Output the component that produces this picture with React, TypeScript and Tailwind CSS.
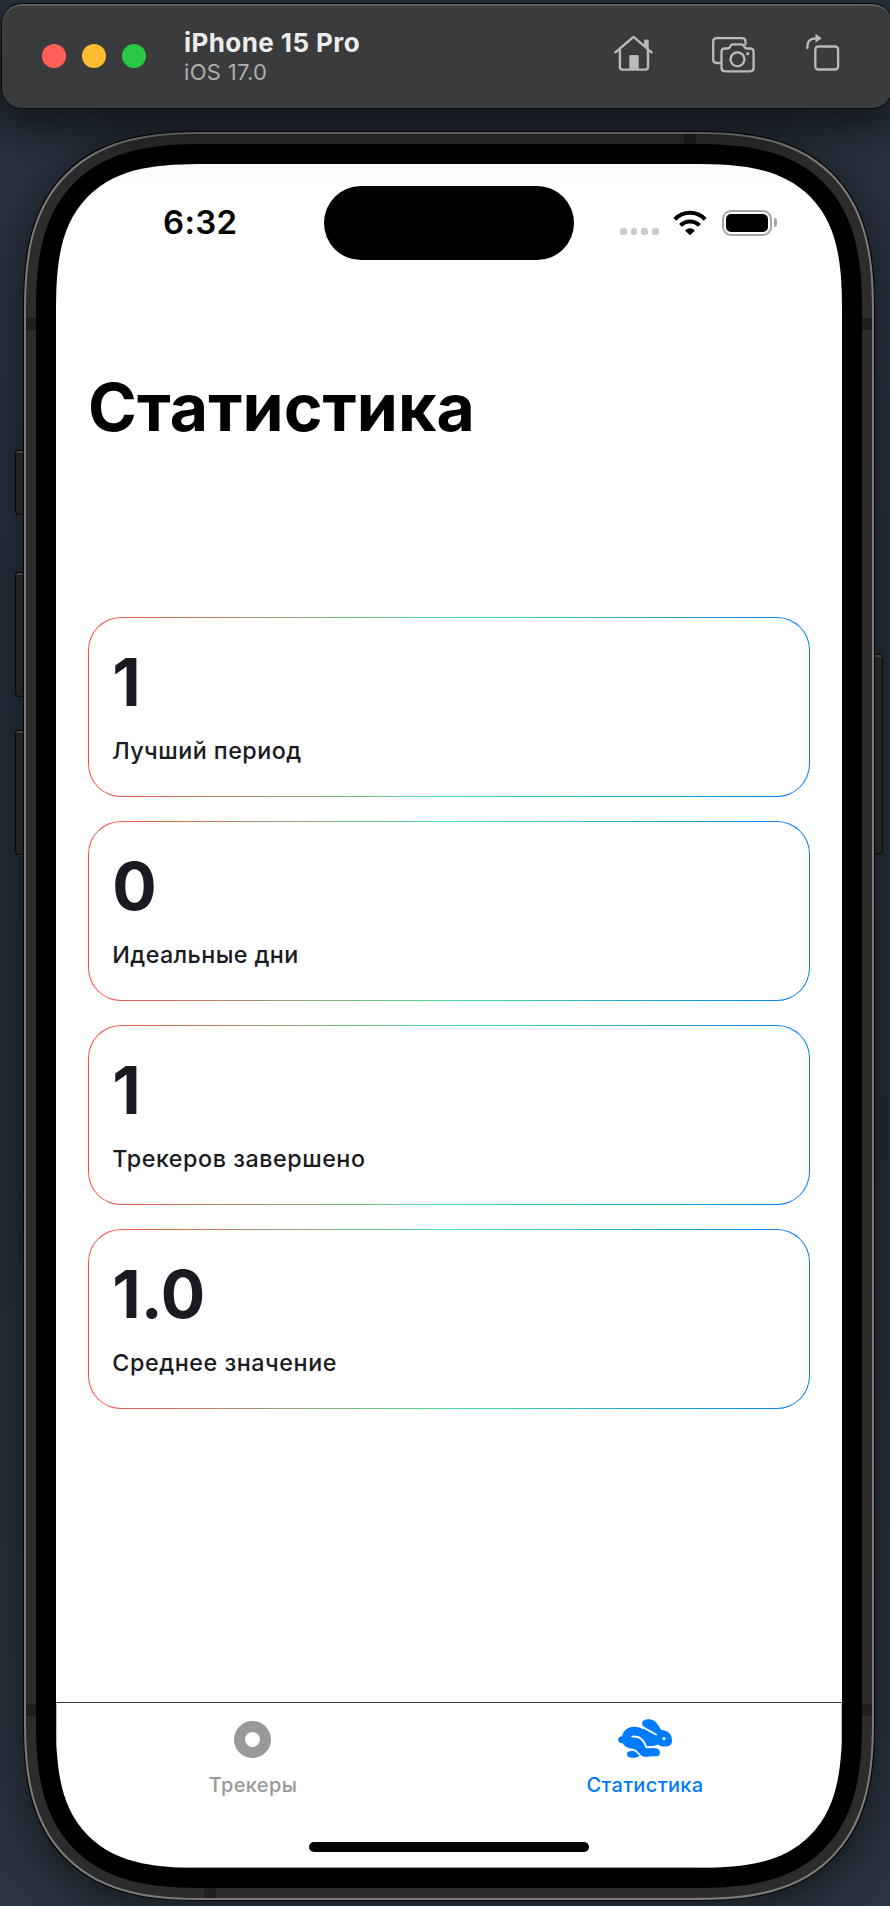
import { ReactNode } from "react";

const stats = [
  { value: "1", label: "Лучший период", spacing: "tracking-[0.48px]" },
  { value: "0", label: "Идеальные дни", spacing: "tracking-[0.4px]" },
  { value: "1", label: "Трекеров завершено", spacing: "tracking-[0.54px]" },
  { value: "1.0", label: "Среднее значение", spacing: "tracking-[0.56px]" },
];

function HomeIcon() {
  return (
    <svg width="40" height="38" viewBox="0 0 40 38" fill="none" stroke="#b9babb" strokeWidth="2.4" strokeLinecap="round" strokeLinejoin="round">
      <path d="M1.400 17.300 18.300 2.800q1.200-1 2.400 0L37.600 17.300" />
      <path d="M5.900 14.500V32q0 2.600 2.600 2.600h22.900q2.600 0 2.600-2.600V14.500" />
      <path d="M31.500 10.500V6h1.800v7" strokeWidth="2.800" />
      <path d="M15.300 35V21.500q0-1.400 1.400-1.400h6.600q1.400 0 1.400 1.400V35z" fill="#b9babb" stroke="none" />
    </svg>
  );
}

function CameraIcon() {
  return (
    <svg width="43" height="36" viewBox="0 0 43 36" fill="none" stroke="#b9babb" strokeWidth="2.300" strokeLinecap="round" strokeLinejoin="round">
      <path d="M8.500 26H4.700Q1.200 26 1.200 22.500V4.700q0-3.500 3.500-3.500H30q3.500 0 3.500 3.500V7.500" />
      <path d="M13 11.500h2.500q1.500 0 2.300-1.300l.9-1.500Q19.500 7.400 21 7.400h8.500q1.500 0 2.200 1.300l.9 1.500q.8 1.300 2.300 1.300h3.200q3.500 0 3.500 3.500v15.800q0 3.500-3.500 3.500H13q-3.500 0-3.500-3.500V15q0-3.500 3.500-3.500z" />
      <circle cx="25.500" cy="22.300" r="7" />
      <circle cx="35.700" cy="16.700" r="1.600" fill="#b9babb" stroke="none" />
    </svg>
  );
}

function RotateIcon() {
  return (
    <svg width="34" height="38" viewBox="0 0 34 38" fill="none" stroke="#b9babb" strokeWidth="2.300" strokeLinecap="round" strokeLinejoin="round">
      <rect x="9.300" y="13.500" width="22.800" height="23" rx="3" />
      <path d="M1.400 15V13Q1.500 5.300 10 5.300" />
      <path d="M9.500.8v9l6.200-4.500z" fill="#b9babb" stroke="none" />
    </svg>
  );
}

function WifiIcon() {
  return (
    <svg width="34" height="26" viewBox="0 0 34 26" fill="none" stroke="#000" strokeWidth="4">
      <path d="M1.800 9.400C10.200.6 23.800.6 32.200 9.400" />
      <path d="M7.500 15.400c5.300-5.300 13.700-5.300 19 0" />
      <path d="M12 20.500q5-4.600 10 0L17 25.300z" fill="#000" stroke="none" />
    </svg>
  );
}

function RabbitIcon() {
  return (
    <svg width="54" height="39" viewBox="0 0 54 39">
      <g fill="#007aff">
        <path d="M.2 20.700C.2 18.500 2 17.300 4 17.200 5.500 11.500 10 7.700 16 7.700c4 0 6.500 1.100 9 2.600l2-1.500C25 7.400 24 6 24.100 4.200 24.200 1.800 27 .2 31 .3c6 .2 9 5.200 12.300 10.700C50 11.500 54 15 54 21.500c0 4.500-2.500 6-7 6-3 0-5-.3-7-2-1.500 1.300-3.500 1.800-6 1.800l-5 .7 4 1c5-.5 9 .5 9 4.500 0 3-2 3.800-5 3.800-4 0-7 .5-10 .5-3.500 0-4.500-2.800-8.500-6.300-2-1.800-5-1.800-7.500-2.500-3-1-5-2.500-6.500-4.800C1.800 24.300.2 23 .2 20.700z" />
        <path d="M9 35.300c0-2.200 1.500-3.300 4-3.300 2.500 0 4 .4 5.300 1.500l3.400 3.200c-1.700 1.400-4.200 2-7.400 2-3.600 0-5.300-1.200-5.300-3.400z" />
      </g>
      <g fill="none" stroke="#fff" strokeWidth="1.900" strokeLinecap="round" strokeLinejoin="round">
        <path d="M14.300 17.600C21 16.700 26 20.700 28.300 28.300q6.500.2 11.300-1.500" />
        <path d="M21.500 6.300 38 15.500" />
      </g>
      <circle cx="46" cy="19.500" r="1.600" fill="#fff" />
    </svg>
  );
}

function ToolbarTitle() {
  return (
    <div className="ml-[38px] flex flex-col">
      <span className="text-[26px] leading-[30px] font-bold tracking-[0.42px] whitespace-nowrap text-[#ececec]">iPhone 15 Pro</span>
      <span className="text-[22px] leading-[29px] tracking-[0.3px] whitespace-nowrap text-[#acadae]">iOS 17.0</span>
    </div>
  );
}

function SimulatorToolbar() {
  return (
    <header className="relative z-10 mt-[4px] ml-[2px] flex h-[104px] w-[890px] shrink-0 items-start rounded-[20px] border-t-2 border-[#5d5e5f] bg-[#3a3b3c] shadow-[0_0_0_1px_#080b0e,0_14px_44px_8px_rgba(0,0,0,0.6)]">
      <div className="mt-[38px] ml-[40px] flex gap-4">
        <span className="size-6 rounded-full bg-[#ff5f57]" />
        <span className="size-6 rounded-full bg-[#febc2e]" />
        <span className="size-6 rounded-full bg-[#28c840]" />
      </div>
      <div className="mt-[22px]">
        <ToolbarTitle />
      </div>
      <div className="mt-[28px] mr-[52px] ml-auto flex items-start">
        <div className="mt-[1px]"><HomeIcon /></div>
        <div className="mt-[3px] ml-[58px]"><CameraIcon /></div>
        <div className="mt-[-1px] ml-[51px]"><RotateIcon /></div>
      </div>
    </header>
  );
}

function SideButton({ className }: { className: string }) {
  return (
    <span className={`absolute border-t-2 border-[#565757] bg-[#2c2c2c] shadow-[0_0_0_1px_#0b0c0d] ${className}`} />
  );
}

function StatusBar() {
  return (
    <div className="flex h-[96px] shrink-0 items-start pt-[22px]">
      <span className="mt-[15px] ml-[107px] w-[73px] text-[33px] leading-[42px] font-semibold tracking-[0.3px] whitespace-nowrap">6:32</span>
      <span className="ml-[88px] h-[74px] w-[250px] rounded-full bg-black" />
      <div className="mt-[23px] ml-[46px] flex items-start">
        <div className="mt-[19px] flex gap-[4px]">
          {[0, 1, 2, 3].map((i) => (
            <span key={i} className="h-[7px] w-[6.700px] rounded-[2.500px] bg-[#cbcbcb]" />
          ))}
        </div>
        <div className="mt-[0.500px] ml-[14px]"><WifiIcon /></div>
        <div className="mt-[0.500px] ml-[15px] flex items-center gap-[2px]">
          <div className="h-[26px] w-[50px] rounded-[9px] border-2 border-[#a5a5a5] p-[2px]">
            <div className="h-full w-full rounded-[5px] bg-black" />
          </div>
          <span className="h-[9px] w-[3px] rounded-r-full bg-[#a5a5a5]" />
        </div>
      </div>
    </div>
  );
}

function StatCard({ value, label, spacing }: { value: string; label: string; spacing: string }) {
  return (
    <div className="h-[180px] rounded-[33px] bg-[linear-gradient(90deg,#fd4c49,#46e69d_50%,#007bfa)] p-[1.300px]">
      <div className="h-full rounded-[32px] bg-white pl-[23px] text-[#1a1b22]">
        <div className="pt-[24px] text-[66px] leading-[80px] font-bold">{value}</div>
        <div className={`pt-[14px] text-[23.300px] leading-[30px] font-medium whitespace-nowrap ${spacing}`}>{label}</div>
      </div>
    </div>
  );
}

function Tab({ icon, label, className }: { icon: ReactNode; label: string; className: string }) {
  return (
    <div className={`flex flex-1 flex-col items-center ${className}`}>
      <div className="flex h-[68px] items-start pt-[16px]">{icon}</div>
      <span className="text-[20px] leading-[28px] font-medium tracking-[0.36px] whitespace-nowrap">{label}</span>
    </div>
  );
}

export default function App() {
  return (
    <div className="flex h-[1906px] w-[890px] flex-col overflow-hidden bg-[linear-gradient(180deg,#2b3541,#242e39_30%,#232c36_60%,#2a343f)] font-['Inter','Liberation_Sans',sans-serif]">
      <SimulatorToolbar />
      <div className="relative mt-[24px] ml-[24px] h-[1768px] w-[850px] shrink-0">
        <SideButton className="top-[319px] left-[-8px] h-[63px] w-[12px] rounded-l-[3px]" />
        <SideButton className="top-[441px] left-[-8px] h-[123px] w-[12px] rounded-l-[3px]" />
        <SideButton className="top-[599px] left-[-8px] h-[123px] w-[12px] rounded-l-[3px]" />
        <SideButton className="top-[523px] right-[-8px] h-[198px] w-[12px] rounded-r-[3px]" />
        <div className="relative h-full w-full rounded-[142px] bg-[#7b7b7b] p-[2px] shadow-[0_0_0_1px_#050607,0_8px_36px_6px_rgba(0,0,0,0.45)] supports-[corner-shape:squircle]:rounded-[180px] supports-[corner-shape:squircle]:[corner-shape:superellipse(1.390)]">
          <div className="h-full w-full rounded-[140px] bg-[#2c2c2c] p-[10px] supports-[corner-shape:squircle]:rounded-[178px] supports-[corner-shape:squircle]:[corner-shape:superellipse(1.390)]">
            <span className="absolute top-[2px] left-[660px] h-[10px] w-[12px] bg-[#1e1e1e]" />
            <span className="absolute bottom-[2px] left-[180px] h-[10px] w-[12px] bg-[#1e1e1e]" />
            <span className="absolute top-[186px] left-[2px] h-[12px] w-[10px] bg-[#1e1e1e]" />
            <span className="absolute top-[186px] right-[2px] h-[12px] w-[10px] bg-[#1e1e1e]" />
            <span className="absolute bottom-[184px] left-[2px] h-[12px] w-[10px] bg-[#1e1e1e]" />
            <span className="absolute right-[2px] bottom-[184px] h-[12px] w-[10px] bg-[#1e1e1e]" />
            <div className="h-full w-full rounded-[130px] bg-black p-[20px] supports-[corner-shape:squircle]:rounded-[170px] supports-[corner-shape:squircle]:[corner-shape:superellipse(1.430)]">
              <main className="flex h-full w-full flex-col overflow-hidden rounded-[110px] bg-white supports-[corner-shape:squircle]:rounded-[150px] supports-[corner-shape:squircle]:[corner-shape:superellipse(1.520)]">
                <StatusBar />
                <h1 className="mt-[105px] ml-[32px] h-[84px] text-[66px] leading-[84px] font-bold tracking-[0.100px] whitespace-nowrap">Статистика</h1>
                <section className="mx-[32px] mt-[168px] flex flex-col gap-[24px]">
                  {stats.map((s, i) => (
                    <StatCard key={i} {...s} />
                  ))}
                </section>
                <nav className="relative mt-auto flex h-[166px] border border-t-[#3f3f44] border-r-[#bbb] border-b-[#999] border-l-[#bbb]">
                  <Tab label="Трекеры" className="text-[#999999]" icon={<span className="mt-[2px] mr-[2px] size-[37px] rounded-full border-[11px] border-[#999999]" />} />
                  <Tab label="Статистика" className="text-[#007aff]" icon={<RabbitIcon />} />
                  <span className="absolute bottom-[15px] left-[252px] h-[10px] w-[280px] rounded-full bg-black" />
                </nav>
              </main>
            </div>
          </div>
        </div>
      </div>
    </div>
  );
}
